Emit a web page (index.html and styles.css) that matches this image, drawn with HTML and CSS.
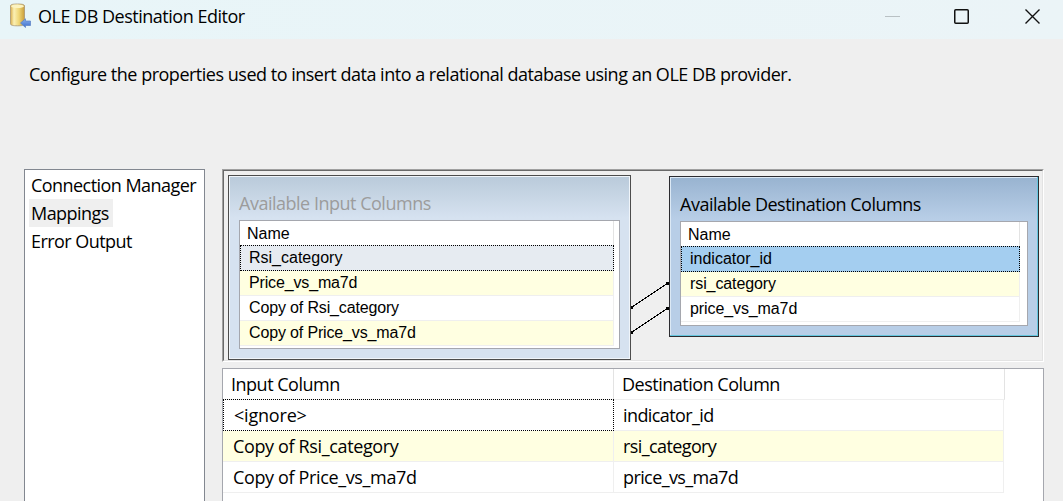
FILE: index.html
```html
<!DOCTYPE html>
<html lang="en">
<head>
<meta charset="utf-8">
<title>OLE DB Destination Editor</title>
<link rel="stylesheet" href="styles.css">
</head>
<body>
<div class="window">
  <header class="titlebar">
    <svg class="app-icon" width="24" height="26" viewBox="0 0 24 26">
      <defs>
        <linearGradient id="gold" x1="0" x2="1" y1="0" y2="0">
          <stop offset="0" stop-color="#d9ae4c"/><stop offset=".25" stop-color="#fbf0b4"/>
          <stop offset=".6" stop-color="#efd676"/><stop offset="1" stop-color="#c99d3a"/>
        </linearGradient>
        <linearGradient id="blue" x1="0" x2="0" y1="0" y2="1">
          <stop offset="0" stop-color="#8bb2ec"/><stop offset="1" stop-color="#3c6ccc"/>
        </linearGradient>
      </defs>
      <path d="M2.500 2.800C2.500 1.500 5 1 9.500 1S16.500 1.500 16.500 2.800V20.800C16.500 22.300 14 22.800 9.500 22.800S2.500 22.300 2.500 20.800Z" fill="url(#gold)" stroke="#a99572" stroke-width=".8"/>
      <ellipse cx="9.500" cy="3.200" rx="6.400" ry="1.800" fill="#fcf3c0"/>
      <path d="M12.500 20L17.500 15.800V18H22.500V22.500H17.500V24.500Z" fill="url(#blue)" stroke="#5a7fc4" stroke-width=".7"/>
    </svg>
    <h1 class="title">OLE DB Destination Editor</h1>
    <svg class="controls" width="156" height="17" viewBox="0 0 156 17">
      <path d="M0 8.500H15" stroke="#b9c1c4"/>
      <rect x="69.750" y="1.750" width="13.500" height="13.500" rx="1" fill="none" stroke="#111" stroke-width="1.500"/>
      <path d="M140.500 1.500L154.500 15.500M154.500 1.500L140.500 15.500" stroke="#111" stroke-width="1.400"/>
    </svg>
  </header>
  <p class="description">Configure the properties used to insert data into a relational database using an OLE DB provider.</p>
  <main class="content">
    <nav class="pages">
      <div class="page"><span class="page-label">Connection Manager</span></div>
      <div class="page"><span class="page-label active">Mappings</span></div>
      <div class="page"><span class="page-label">Error Output</span></div>
    </nav>
    <section class="workspace">
      <div class="canvas">
        <svg class="links" width="40" height="60" viewBox="0 0 40 60">
          <path d="M2 28L38 4M2 53L38 29" stroke="#000" fill="none" shape-rendering="crispEdges"/>
          <path d="M1 27h2v3h-2zM36 3h3v3h-3zM1 52h2v3h-2zM36 28h3v3h-3z"/>
        </svg>
        <div class="node node-input">
          <h2 class="node-title">Available Input Columns</h2>
          <div class="list">
            <div class="list-head">Name</div>
            <div class="list-row selected">Rsi_category</div>
            <div class="list-row alt">Price_vs_ma7d</div>
            <div class="list-row">Copy of Rsi_category</div>
            <div class="list-row alt">Copy of Price_vs_ma7d</div>
          </div>
        </div>
        <div class="node node-dest">
          <h2 class="node-title">Available Destination Columns</h2>
          <div class="list">
            <div class="list-head">Name</div>
            <div class="list-row selected">indicator_id</div>
            <div class="list-row alt">rsi_category</div>
            <div class="list-row">price_vs_ma7d</div>
          </div>
        </div>
      </div>
      <div class="grid">
        <div class="grid-row grid-head"><div class="cell">Input Column</div><div class="cell">Destination Column</div></div>
        <div class="grid-row"><div class="cell focused">&lt;ignore&gt;</div><div class="cell target">indicator_id</div></div>
        <div class="grid-row alt"><div class="cell source">Copy of Rsi_category</div><div class="cell target">rsi_category</div></div>
        <div class="grid-row"><div class="cell source">Copy of Price_vs_ma7d</div><div class="cell target">price_vs_ma7d</div></div>
      </div>
    </section>
  </main>
</div>
</body>
</html>
```
FILE: styles.css
```css
* { box-sizing: border-box; }
body { margin: 0; background: #efefef; color: #000; font: 400 18px/28px "Open Sans", "Noto Sans", sans-serif; letter-spacing: -.49px; overflow: hidden; }
h1, h2, p { margin: 0; font-weight: inherit; font-size: inherit; white-space: nowrap; }
.window { height: 501px; display: flex; flex-direction: column; overflow: hidden; }
.titlebar { height: 39px; flex: none; display: flex; align-items: flex-start; background: linear-gradient(90deg, #e8f5f8, #ebf4f7); padding: 3px 22px 0 8px; }
.title { margin-left: 6px; line-height: 26px; letter-spacing: -.49px; }
.controls { margin: 5px 0 0 auto; }
.description { padding: 21px 0 0 29px; height: 130px; flex: none; }
.content { display: flex; gap: 17px; flex: 1; padding-left: 24px; min-height: 0; }
.pages { width: 181px; border: 1px solid #828790; border-bottom: 0; background: #fff; padding: 1px 4px; letter-spacing: -.55px; }
.page { height: 28px; display: flex; white-space: nowrap; }
.page-label { padding: 0 2px; }
.active { min-width: 84px; background: #efefef; }
.workspace { width: 822px; display: flex; flex-direction: column; gap: 6px; }
.canvas { height: 193px; flex: none; position: relative; border: 1px solid; border-color: #a0a0a0 #fff #fff #a0a0a0; }
.canvas::before { content: ""; position: absolute; inset: 0; border: 1px solid; border-color: #696969 #e3e3e3 #e3e3e3 #696969; }
.links { position: absolute; left: 407px; top: 109px; }
.node { position: absolute; border: 1px solid #4c4c4c; padding: 13px 10px 0; }
.node-input { left: 5px; top: 5px; width: 403px; height: 185px; box-shadow: inset 0 0 0 1px #f0f5fa; background: linear-gradient(#b9cada, #d6e2f0 42px); }
.node-dest { left: 446px; top: 6px; width: 370px; height: 161px; border-color: #2c2c30; box-shadow: inset -1px -1px #65c6de, inset 1px 1px #dce9f5; background: linear-gradient(#98b3d0, #b8cee7 42px); }
.node-title { height: 31px; }
.node-input .node-title { color: #9c9c9c; }
.list { border: 1px solid #a5a7ae; background: #fff; padding-right: 5px; font: 16px/24px "Liberation Sans", Arial, sans-serif; letter-spacing: -.1px; }
.node-input .list { height: 129px; letter-spacing: -.15px; }
.node-dest .list { height: 105px; padding-right: 7px; }
.list-head { height: 24px; padding-left: 7px; border-right: 1px solid #e3e3e3; line-height: 26px; letter-spacing: 0; }
.list-row { height: 25px; padding-left: 9px; border: solid #efefef; border-width: 0 1px 1px 0; }
.alt { background: #ffffe1; }
.selected { height: 26px; padding-left: 8px; border: 1px dotted #000; background: #e6ebf1; letter-spacing: 0; }
.node-dest .selected { background: #a4cef0; }
.grid { flex: 1; border: 1px solid #a5a7ae; border-bottom: 0; background: #fff; }
.grid-row { width: 781px; height: 31px; display: grid; grid-template: 31px / 391px 390px; line-height: 31px; }
.grid-head { width: 782px; grid-template-columns: 391px 391px; }
.cell { padding-left: 10px; border: solid #efefef; border-width: 0 1px 1px 0; }
.source { letter-spacing: -.36px; }
.target { padding-left: 9px; letter-spacing: -.6px; }
.grid-head .cell { padding-left: 8px; border-right-color: #e3e3e3; }
.grid-row .focused { margin-top: -1px; border: 1px dotted #000; letter-spacing: -.2px; }
```
